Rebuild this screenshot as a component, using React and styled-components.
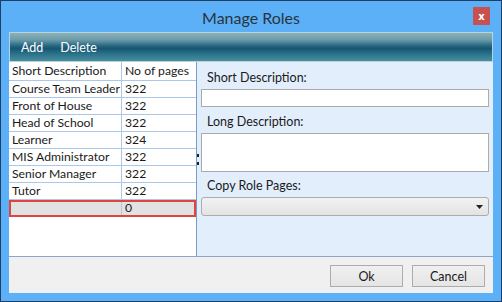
import React from 'react'
import styled, { createGlobalStyle } from 'styled-components'

const GlobalStyle = createGlobalStyle`
    body {
        margin: 0;
        background: #5aaff5;
        font-family: Lato, "Noto Sans", sans-serif;
    }
`

const Window = styled.div`
    width: 502px;
    height: 302px;
    box-sizing: border-box;
    border: 1px solid #1e3f63;
    background: #5cb0f7;
    padding: 0 8px 8px 8px;
    display: flex;
    flex-direction: column;
`

const TitleBar = styled.div`
    height: 31px;
    display: flex;
    align-items: center;
    justify-content: center;
    position: relative;
`

const Title = styled.div`
    font-size: 16px;
    color: #2a3440;
    padding-top: 1px;
`

const CloseButton = styled.div`
    position: absolute;
    right: 3px;
    top: 6px;
    width: 17px;
    height: 18px;
    background: #c75050;
    color: #fff;
    font-family: "DejaVu Sans", sans-serif;
    font-weight: bold;
    font-size: 10px;
    display: flex;
    align-items: center;
    justify-content: center;
`

const Body = styled.div`
    flex: 1;
    display: flex;
    flex-direction: column;
    background: #f0f0f0;
`

const Toolbar = styled.div`
    height: 28px;
    border: 1px solid #b9d3da;
    background: linear-gradient(
        to bottom,
        #8bb1ba 0%,
        #6a9aa8 25%,
        #2a6982 45%,
        #175672 55%,
        #2f7990 80%,
        #4a8c9d 100%
    );
    display: flex;
    align-items: center;
    padding-left: 11px;
    gap: 17px;
`

const ToolButton = styled.span`
    color: #fff;
    font-size: 12.5px;
`

const Main = styled.div`
    height: 194px;
    display: flex;
`

const GridPanel = styled.div`
    width: 187px;
    background: #fff;
    border-right: 1px solid #7a9ccc;
    display: flex;
    flex-direction: column;
`

const Row = styled.div`
    display: grid;
    grid-template-columns: 113px 1fr;
    height: ${p => (p.$header ? 19 : 17)}px;
    box-sizing: border-box;
    border-bottom: 1px solid #a9c8ec;
    background: ${p => (p.$selected ? '#e2e2e2' : '#fff')};
    outline: ${p => (p.$selected ? '2px solid #e0443c' : 'none')};
    outline-offset: -2px;
`

const Cell = styled.div`
    font-size: 12.2px;
    line-height: ${p => (p.$header ? 18 : 16)}px;
    color: #1a1a1a;
    padding-left: 3px;
    white-space: nowrap;
    overflow: hidden;
    border-right: ${p => (p.$first ? '1px solid #a9c8ec' : 'none')};
`

const Splitter = styled.div`
    width: 3px;
    display: flex;
    flex-direction: column;
    justify-content: center;
    align-items: flex-start;
    gap: 5px;
    background: #e3eefc;
`

const Dot = styled.div`
    width: 2px;
    height: 3px;
    background: #222;
`

const FormPanel = styled.div`
    flex: 1;
    background: #e3eefc;
    padding: 6px 4px 0 1px;
    display: flex;
    flex-direction: column;
`

const Label = styled.div`
    font-size: 12.5px;
    color: #1a1a1a;
    padding-left: 6px;
    height: 21px;
    line-height: 20px;
`

const TextBox = styled.div`
    height: ${p => p.$h}px;
    box-sizing: border-box;
    border: 1px solid #ababab;
    background: #fff;
    margin-bottom: ${p => p.$mb}px;
`

const Combo = styled.div`
    height: 19px;
    box-sizing: border-box;
    border: 1px solid #acacac;
    border-radius: 3px;
    background: linear-gradient(to bottom, #f2f2f2, #e3e3e3);
    display: flex;
    align-items: center;
    justify-content: flex-end;
    padding-right: 5px;
`

const Footer = styled.div`
    flex: 1;
    border-top: 1px solid #8ba6c8;
    display: flex;
    justify-content: flex-end;
    align-items: flex-start;
    padding: 8px 8px 0 0;
    gap: 9px;
`

const Button = styled.div`
    width: 73px;
    height: 22px;
    box-sizing: border-box;
    border: 1px solid #acacac;
    background: linear-gradient(to bottom, #f0f0f0, #e5e5e5);
    font-size: 12.5px;
    color: #1a1a1a;
    display: flex;
    align-items: center;
    justify-content: center;
`

const roles = [
    ['Course Team Leader', '322'],
    ['Front of House', '322'],
    ['Head of School', '322'],
    ['Learner', '324'],
    ['MIS Administrator', '322'],
    ['Senior Manager', '322'],
    ['Tutor', '322'],
]

const App = () => {
    return (
        <Window>
            <GlobalStyle />
            <TitleBar>
                <Title>Manage Roles</Title>
                <CloseButton>x</CloseButton>
            </TitleBar>
            <Body>
                <Toolbar>
                    <ToolButton>Add</ToolButton>
                    <ToolButton>Delete</ToolButton>
                </Toolbar>
                <Main>
                    <GridPanel>
                        <Row $header>
                            <Cell $first $header>Short Description</Cell>
                            <Cell $header>No of pages</Cell>
                        </Row>
                        {roles.map(([name, pages]) => (
                            <Row key={name}>
                                <Cell $first>{name}</Cell>
                                <Cell>{pages}</Cell>
                            </Row>
                        ))}
                        <Row $selected>
                            <Cell $first></Cell>
                            <Cell>0</Cell>
                        </Row>
                    </GridPanel>
                    <Splitter>
                        <Dot />
                        <Dot />
                    </Splitter>
                    <FormPanel>
                        <Label>Short Description:</Label>
                        <TextBox $h={18} $mb={5} />
                        <Label>Long Description:</Label>
                        <TextBox $h={39} $mb={4} />
                        <Label>Copy Role Pages:</Label>
                        <Combo>
                            <svg width="7" height="4" viewBox="0 0 7 4">
                                <path d="M0 0h7L3.5 4z" fill="#222" />
                            </svg>
                        </Combo>
                    </FormPanel>
                </Main>
                <Footer>
                    <Button>Ok</Button>
                    <Button>Cancel</Button>
                </Footer>
            </Body>
        </Window>
    )
}

export default App
